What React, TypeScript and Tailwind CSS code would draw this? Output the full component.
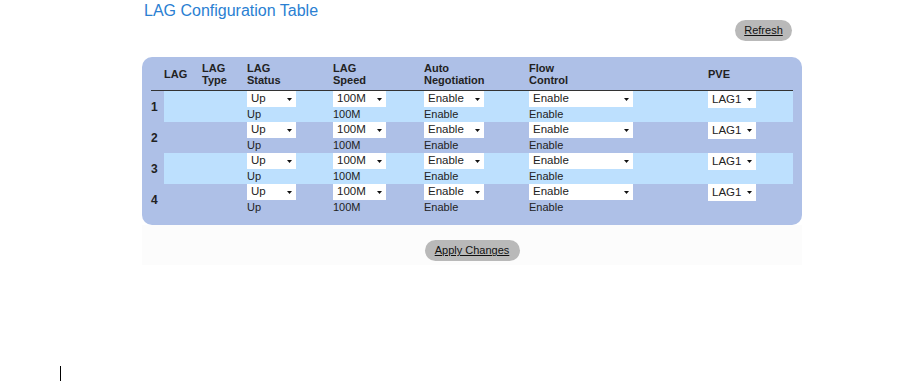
const font = { fontFamily: '"Liberation Sans", Arial, sans-serif' };

const rows = [
  { id: "1", status: "Up", speed: "100M", auto: "Enable", flow: "Enable", pve: "LAG1" },
  { id: "2", status: "Up", speed: "100M", auto: "Enable", flow: "Enable", pve: "LAG1" },
  { id: "3", status: "Up", speed: "100M", auto: "Enable", flow: "Enable", pve: "LAG1" },
  { id: "4", status: "Up", speed: "100M", auto: "Enable", flow: "Enable", pve: "LAG1" },
];

function FakeSelect({ value, width }: { value: string; width: string }) {
  return (
    <div className={`${width} h-[17px] bg-white flex items-center justify-between pl-[4px] pr-[4px] text-[11.5px] leading-none text-[#222]`}>
      <span>{value}</span>
      <svg width="5" height="3" viewBox="0 0 5 3">
        <path d="M0 0h5L2.5 3z" fill="#111" />
      </svg>
    </div>
  );
}

function Head({ lines, width }: { lines: string[]; width: string }) {
  return (
    <div className={`${width} shrink-0 flex flex-col justify-center text-[11px] leading-[12px] font-bold text-[#222]`}>
      {lines.map(l => (
        <span key={l}>{l}</span>
      ))}
    </div>
  );
}

function Cell({ value, sel, selWidth, width }: { value: string; sel: string; selWidth: string; width: string }) {
  return (
    <div className={`${width} shrink-0 flex flex-col`}>
      <FakeSelect value={sel} width={selWidth} />
      <span className="text-[11px] leading-[13px] text-[#222] mt-[1px]">{value}</span>
    </div>
  );
}

export default function App() {
  return (
    <div className="w-[900px] h-[381px] bg-white flex flex-col overflow-hidden" style={font}>
      <div className="ml-[142px] w-[660px] flex flex-col">
        <div className="h-[20px] pl-[2px] text-[16px] leading-[22px] text-[#2a80d2]">LAG Configuration Table</div>

        <div className="flex justify-end pr-[10px]">
          <button className="w-[57px] h-[21px] rounded-full bg-[#b9b9b9] text-[11px] text-[#111] underline">
            Refresh
          </button>
        </div>

        <div className="mt-[16px] h-[168px] bg-[#aec0e7] rounded-[10px] px-[9px] flex flex-col">
          <div className="h-[34px] flex border-b border-[#333]">
            <Head lines={[""]} width="w-[13px]" />
            <Head lines={["LAG"]} width="w-[38px]" />
            <Head lines={["LAG", "Type"]} width="w-[45px]" />
            <Head lines={["LAG", "Status"]} width="w-[86px]" />
            <Head lines={["LAG", "Speed"]} width="w-[91px]" />
            <Head lines={["Auto", "Negotiation"]} width="w-[105px]" />
            <Head lines={["Flow", "Control"]} width="w-[179px]" />
            <Head lines={["PVE"]} width="w-[85px]" />
          </div>

          {rows.map((r, i) => (
            <div key={r.id} className="h-[31px] flex">
              <div className="w-[13px] shrink-0 flex items-center text-[12px] font-bold text-[#222]">{r.id}</div>
              <div className={`flex-1 flex pb-[1px] ${i % 2 === 0 ? "bg-[#bde0fe]" : ""}`}>
                <div className="w-[38px] shrink-0" />
                <div className="w-[45px] shrink-0" />
                <Cell value={r.status} sel={r.status} selWidth="w-[49px]" width="w-[86px]" />
                <Cell value={r.speed} sel={r.speed} selWidth="w-[53px]" width="w-[91px]" />
                <Cell value={r.auto} sel={r.auto} selWidth="w-[60px]" width="w-[105px]" />
                <Cell value={r.flow} sel={r.flow} selWidth="w-[104px]" width="w-[179px]" />
                <div className="w-[85px] shrink-0">
                  <FakeSelect value={r.pve} width="w-[48px]" />
                </div>
              </div>
            </div>
          ))}
        </div>

        <div className="h-[40px] bg-[#fcfcfc] flex justify-center pt-[15px]">
          <button className="w-[95px] h-[21px] rounded-full bg-[#b9b9b9] text-[11px] text-[#111] underline">
            Apply Changes
          </button>
        </div>
      </div>

      <div className="ml-[60px] mt-[101px] w-px h-[15px] bg-black" />
    </div>
  );
}
